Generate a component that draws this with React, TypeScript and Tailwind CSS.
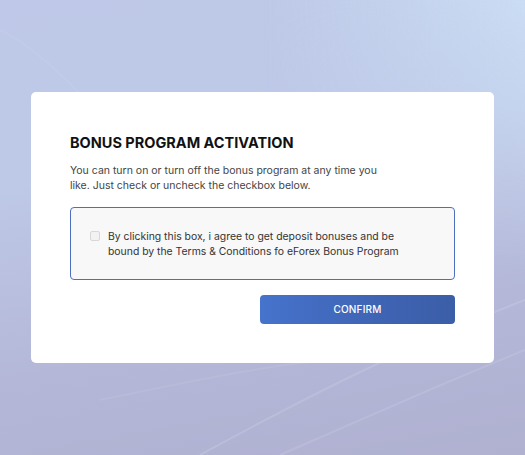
import React from "react";

export default function App() {
  return (
    <div
      className="relative w-[525px] h-[455px] overflow-hidden bg-[linear-gradient(170deg,#bfc8e8_0%,#bec8e7_35%,#b4b7d8_70%,#b0b1d1_100%)]"
      style={{ fontFamily: "Inter, 'Open Sans', sans-serif" }}
    >
      <div className="absolute inset-0 bg-[linear-gradient(90deg,rgba(205,225,246,0)_50%,rgba(205,225,246,0.8)_100%)] [mask-image:linear-gradient(180deg,black_0%,transparent_60%)]" />
      <svg className="absolute inset-0" width="525" height="455" viewBox="0 0 525 455">
        <path d="M0 30 C 60 60, 120 140, 180 200" stroke="rgba(255,255,255,0.06)" strokeWidth="2" fill="none" />
        <path d="M200 455 C 300 400, 420 340, 525 300" stroke="rgba(255,255,255,0.12)" strokeWidth="2" fill="none" />
        <path d="M280 455 C 360 420, 450 380, 525 350" stroke="rgba(255,255,255,0.1)" strokeWidth="2" fill="none" />
        <path d="M100 400 C 200 380, 320 350, 420 360" stroke="rgba(255,255,255,0.07)" strokeWidth="2" fill="none" />
      </svg>
      <div className="relative pt-[92px]">
        <div className="mx-auto w-[463px] h-[271px] rounded-[5px] bg-white pl-[39px] pr-[39px] pt-[41px]">
          <h1 className="text-[14.5px] font-bold text-[#111] leading-[20px]">
            BONUS PROGRAM ACTIVATION
          </h1>
          <p className="mt-[10px] text-[10.5px] leading-[15px] text-[#444]">
            You can turn on or turn off the bonus program at any time you
            <br />
            like. Just check or uncheck the checkbox below.
          </p>
          <div className="mt-[14px] h-[73px] rounded-[4px] border border-[#4d6fbf] bg-[#f8f8f8] flex items-center pl-[19px] pr-[20px]">
            <div className="w-[10px] h-[10px] rounded-[2px] border border-[#d8d8d8] bg-[#f2f2f2] mb-[16px] shrink-0" />
            <p className="ml-[8px] text-[10.4px] leading-[15px] text-[#333]">
              By clicking this box, i agree to get deposit bonuses and be
              <br />
              bound by the Terms &amp; Conditions fo eForex Bonus Program
            </p>
          </div>
          <div className="flex justify-end mt-[15px]">
            <button className="w-[195px] h-[29px] rounded-[4px] bg-[linear-gradient(90deg,#4673cc_0%,#3f64b4_60%,#3c5ea8_100%)] text-white text-[10px] font-medium tracking-[0.2px]">
              CONFIRM
            </button>
          </div>
        </div>
      </div>
    </div>
  );
}
